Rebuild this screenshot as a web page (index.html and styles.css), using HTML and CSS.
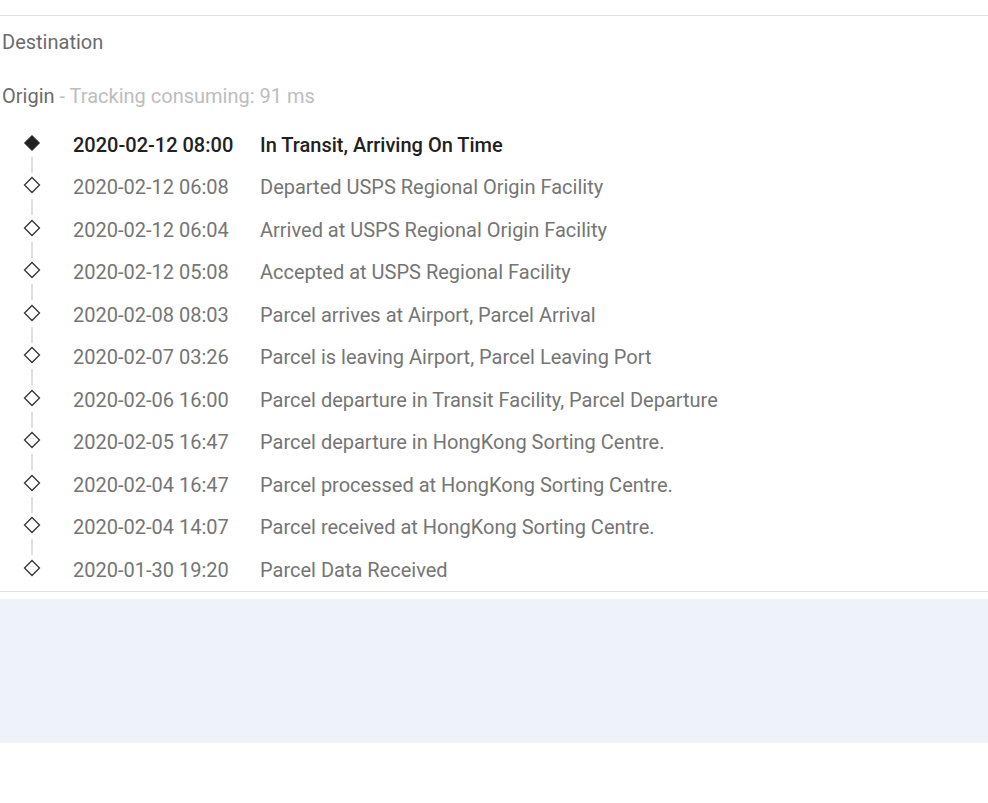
FILE: index.html
```html
<!DOCTYPE html>
<html lang="en">
<head>
<meta charset="utf-8">
<title>Tracking</title>
<link rel="stylesheet" href="styles.css">
</head>
<body>
<div class="page">
  <div class="topbar"></div>
  <div class="label dest">Destination</div>
  <div class="label origin">Origin <span class="muted">- Tracking consuming: 91 ms</span></div>
  <ul class="timeline">
    <li class="event current">
      <span class="icon"><svg width="18" height="18" viewBox="0 0 18 18"><polygon points="9,1.5 16.5,9 9,16.5 1.5,9" fill="#222" stroke="#222" stroke-width="1"/></svg></span>
      <span class="date">2020-02-12 08:00</span>
      <span class="desc">In Transit, Arriving On Time</span>
    </li>
    <li class="event">
      <span class="icon"><svg width="18" height="18" viewBox="0 0 18 18"><polygon points="9,1.5 16.5,9 9,16.5 1.5,9" fill="#fff" stroke="#333" stroke-width="1.3"/></svg></span>
      <span class="date">2020-02-12 06:08</span>
      <span class="desc">Departed USPS Regional Origin Facility</span>
    </li>
    <li class="event">
      <span class="icon"><svg width="18" height="18" viewBox="0 0 18 18"><polygon points="9,1.5 16.5,9 9,16.5 1.5,9" fill="#fff" stroke="#333" stroke-width="1.3"/></svg></span>
      <span class="date">2020-02-12 06:04</span>
      <span class="desc">Arrived at USPS Regional Origin Facility</span>
    </li>
    <li class="event">
      <span class="icon"><svg width="18" height="18" viewBox="0 0 18 18"><polygon points="9,1.5 16.5,9 9,16.5 1.5,9" fill="#fff" stroke="#333" stroke-width="1.3"/></svg></span>
      <span class="date">2020-02-12 05:08</span>
      <span class="desc">Accepted at USPS Regional Facility</span>
    </li>
    <li class="event">
      <span class="icon"><svg width="18" height="18" viewBox="0 0 18 18"><polygon points="9,1.5 16.5,9 9,16.5 1.5,9" fill="#fff" stroke="#333" stroke-width="1.3"/></svg></span>
      <span class="date">2020-02-08 08:03</span>
      <span class="desc">Parcel arrives at Airport, Parcel Arrival</span>
    </li>
    <li class="event">
      <span class="icon"><svg width="18" height="18" viewBox="0 0 18 18"><polygon points="9,1.5 16.5,9 9,16.5 1.5,9" fill="#fff" stroke="#333" stroke-width="1.3"/></svg></span>
      <span class="date">2020-02-07 03:26</span>
      <span class="desc">Parcel is leaving Airport, Parcel Leaving Port</span>
    </li>
    <li class="event">
      <span class="icon"><svg width="18" height="18" viewBox="0 0 18 18"><polygon points="9,1.5 16.5,9 9,16.5 1.5,9" fill="#fff" stroke="#333" stroke-width="1.3"/></svg></span>
      <span class="date">2020-02-06 16:00</span>
      <span class="desc">Parcel departure in Transit Facility, Parcel Departure</span>
    </li>
    <li class="event">
      <span class="icon"><svg width="18" height="18" viewBox="0 0 18 18"><polygon points="9,1.5 16.5,9 9,16.5 1.5,9" fill="#fff" stroke="#333" stroke-width="1.3"/></svg></span>
      <span class="date">2020-02-05 16:47</span>
      <span class="desc">Parcel departure in HongKong Sorting Centre.</span>
    </li>
    <li class="event">
      <span class="icon"><svg width="18" height="18" viewBox="0 0 18 18"><polygon points="9,1.5 16.5,9 9,16.5 1.5,9" fill="#fff" stroke="#333" stroke-width="1.3"/></svg></span>
      <span class="date">2020-02-04 16:47</span>
      <span class="desc">Parcel processed at HongKong Sorting Centre.</span>
    </li>
    <li class="event">
      <span class="icon"><svg width="18" height="18" viewBox="0 0 18 18"><polygon points="9,1.5 16.5,9 9,16.5 1.5,9" fill="#fff" stroke="#333" stroke-width="1.3"/></svg></span>
      <span class="date">2020-02-04 14:07</span>
      <span class="desc">Parcel received at HongKong Sorting Centre.</span>
    </li>
    <li class="event last">
      <span class="icon"><svg width="18" height="18" viewBox="0 0 18 18"><polygon points="9,1.5 16.5,9 9,16.5 1.5,9" fill="#fff" stroke="#333" stroke-width="1.3"/></svg></span>
      <span class="date">2020-01-30 19:20</span>
      <span class="desc">Parcel Data Received</span>
    </li>
  </ul>
  <div class="panel"></div>
</div>
</body>
</html>
```
FILE: styles.css
```css
* { box-sizing: border-box; }
html, body { margin: 0; padding: 0; background: #fff; }
body {
  font-family: Roboto, "Liberation Sans", Arial, sans-serif;
  font-size: 20px;
  color: #757575;
}
.topbar {
  height: 16px;
  border-bottom: 1px solid #e0e0e0;
}
.label {
  padding-left: 2px;
  line-height: 24px;
  color: #6b6b6b;
}
.dest { margin-top: 14px; }
.origin { margin-top: 30px; }
.muted { color: #bdbdbd; }
.timeline {
  list-style: none;
  margin: 15.5px 0 0;
  padding: 0;
  border-bottom: 1px solid #e0e0e0;
}
.event {
  position: relative;
  display: grid;
  grid-template-columns: 73px 187px 1fr;
  align-items: center;
  height: 42.5px;
}
.event::after {
  content: "";
  position: absolute;
  left: 31px;
  top: 33px;
  width: 2px;
  height: 16px;
  background: #dedede;
}
.event.last::after { display: none; }
.icon {
  display: flex;
  justify-content: center;
  width: 18px;
  margin-left: 23px;
  margin-top: -4px;
}
.icon svg { display: block; }
.date, .desc { line-height: 24px; white-space: nowrap; }
.current .date, .current .desc {
  color: #212121;
  font-weight: 500;
}
.panel {
  margin-top: 7px;
  height: 144px;
  background: #eef2fa;
}
```
